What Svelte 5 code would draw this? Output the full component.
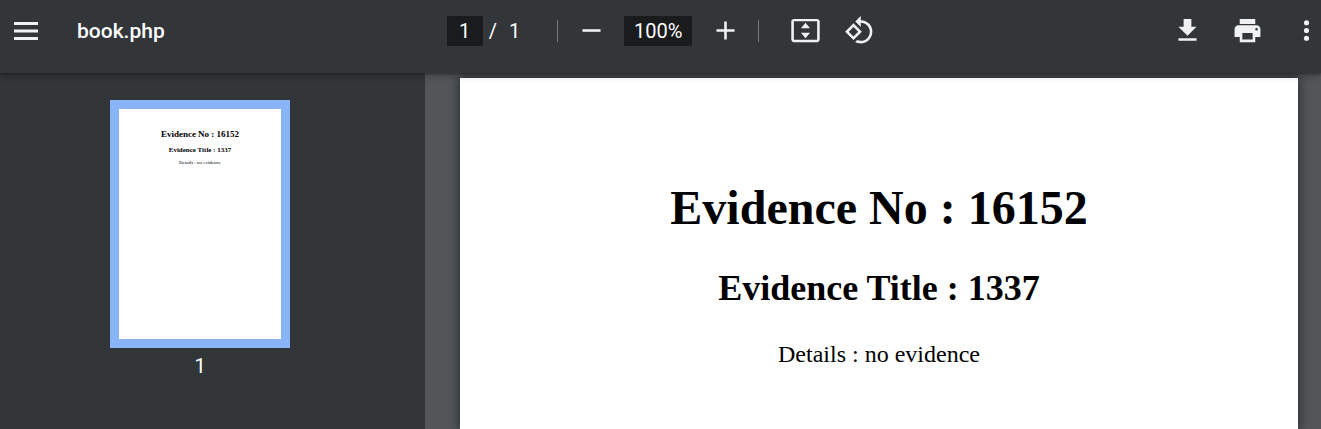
<script>
  const fileName = 'book.php';
  const evidence = {
    number: 'Evidence No : 16152',
    title: 'Evidence Title : 1337',
    details: 'Details : no evidence'
  };
  let page = $state('1');
  let zoom = $state('100%');
</script>

<svelte:head><title>{fileName}</title></svelte:head>

<div class="viewer">
  <header class="toolbar">
    <div class="start">
      <button class="icon" aria-label="Menu">
        <svg class="menu" viewBox="0 0 24 18"><path d="M0 0h24v3H0zM0 7.5h24v3H0zM0 15h24v3H0z" /></svg>
      </button>
      <h1>{fileName}</h1>
    </div>

    <div class="controls">
      <div class="pages">
        <input class="page-box" aria-label="Page number" bind:value={page} />
        <span class="slash">/</span>
        <span>1</span>
      </div>
      <span class="divider"></span>
      <div class="zoom">
        <button class="icon" aria-label="Zoom out">
          <svg viewBox="0 0 24 24"><path d="M5 11h14v2H5z" /></svg>
        </button>
        <input class="zoom-box" aria-label="Zoom level" bind:value={zoom} />
        <button class="icon" aria-label="Zoom in">
          <svg viewBox="0 0 24 24"><path d="M19 13h-6v6h-2v-6H5v-2h6V5h2v6h6z" /></svg>
        </button>
      </div>
      <span class="divider"></span>
      <div class="view">
        <button class="icon" aria-label="Fit to page">
          <svg viewBox="0 0 24 24">
            <path d="M21 3H3c-1.1 0-2 .9-2 2v14c0 1.1.9 2 2 2h18c1.1 0 2-.9 2-2V5c0-1.1-.9-2-2-2zm0 16.2H3V4.8h18z" />
            <path d="M12 6l3.5 4.3h-7zM12 18l-3.5-4.3h7z" />
          </svg>
        </button>
        <button class="icon" aria-label="Rotate counterclockwise">
          <svg viewBox="0 0 24 24">
            <path d="M7.34 6.41L.86 12.9l6.49 6.48 6.49-6.48-6.5-6.49zM3.69 12.9l3.66-3.66L11 12.9l-3.66 3.66-3.65-3.66zm15.67-6.26C17.61 4.88 15.3 4 13 4V.76L8.76 5 13 9.24V6c1.79 0 3.58.68 4.95 2.05 2.73 2.73 2.73 7.17 0 9.9C16.58 19.32 14.79 20 13 20c-.97 0-1.94-.21-2.84-.61l-1.49 1.49C10.02 21.62 11.51 22 13 22c2.3 0 4.61-.88 6.36-2.64 3.52-3.51 3.52-9.21 0-12.72z" />
          </svg>
        </button>
      </div>
    </div>

    <div class="end">
      <button class="icon" aria-label="Download">
        <svg viewBox="0 0 24 24"><path d="M19 9h-4V3H9v6H5l7 7 7-7zM5 18v2h14v-2H5z" /></svg>
      </button>
      <button class="icon" aria-label="Print">
        <svg viewBox="0 0 24 24">
          <path d="M19 8H5c-1.66 0-3 1.34-3 3v6h4v4h12v-4h4v-6c0-1.66-1.34-3-3-3zm-3 11H8v-5h8v5zm3-7c-.55 0-1-.45-1-1s.45-1 1-1 1 .45 1 1-.45 1-1 1zm-1-9H6v4h12V3z" />
        </svg>
      </button>
      <button class="icon more" aria-label="More actions">
        <svg viewBox="0 0 24 24">
          <circle cx="12" cy="6" r="2" /><circle cx="12" cy="12" r="2" /><circle cx="12" cy="18" r="2" />
        </svg>
      </button>
    </div>
  </header>

  <div class="body">
    <aside>
      <button class="thumb" aria-label="Page 1">
        <span class="t1">{evidence.number}</span>
        <span class="t2">{evidence.title}</span>
        <span class="t3">{evidence.details}</span>
      </button>
      <span class="label">1</span>
    </aside>
    <main>
      <article>
        <h2>{evidence.number}</h2>
        <h3>{evidence.title}</h3>
        <p>{evidence.details}</p>
      </article>
    </main>
  </div>
</div>

<style>
  :global(body) {
    margin: 0;
    background: #525659;
  }
  .viewer {
    display: flex;
    flex-direction: column;
    height: 100vh;
    overflow: hidden;
    font-family: Roboto, 'Liberation Sans', sans-serif;
    font-size: 20px;
    line-height: 30px;
    color: #fff;
  }
  .toolbar {
    position: relative;
    z-index: 1;
    display: grid;
    grid-template-columns: 1fr auto 1fr;
    padding: 15px 0 27px;
    background: #323639;
    box-shadow: 0 2px 8px rgba(0, 0, 0, 0.09), 0 4px 8px rgba(0, 0, 0, 0.06),
      0 1px 2px rgba(0, 0, 0, 0.3), 0 2px 6px rgba(0, 0, 0, 0.15);
  }
  .start,
  .controls,
  .pages,
  .zoom,
  .view,
  .end {
    display: flex;
    align-items: center;
  }
  .start {
    gap: 36px;
    padding-left: 11px;
  }
  .end {
    justify-content: flex-end;
    gap: 30px;
  }
  h1 {
    margin: 0;
    font-size: 21px;
    font-weight: 500;
  }
  button {
    padding: 0;
    border: 0;
    font: inherit;
    cursor: pointer;
  }
  .icon {
    display: flex;
    justify-content: center;
    align-items: center;
    width: 30px;
    height: 31px;
    background: none;
  }
  .icon svg {
    flex: none;
    width: 31px;
    height: 31px;
    fill: #f1f1f1;
  }
  .icon .menu {
    width: 24px;
    height: 18px;
  }
  .more {
    width: 29px;
  }
  .controls {
    gap: 18px;
  }
  .pages {
    margin-right: 19px;
  }
  input {
    box-sizing: border-box;
    height: 30px;
    padding: 0;
    border: 0;
    background: #191b1c;
    color: #fff;
    font: inherit;
    text-align: center;
  }
  .page-box {
    width: 36px;
  }
  .slash {
    margin: 0 12px 0 6px;
  }
  .zoom-box {
    width: 68px;
  }
  .zoom {
    gap: 18px;
  }
  .divider {
    width: 1px;
    height: 22px;
    background: #76797b;
  }
  .view {
    gap: 24px;
    margin-left: 13px;
  }
  .body {
    flex: 1;
    display: grid;
    grid-template-columns: 425px 1fr;
    min-height: 0;
  }
  aside {
    display: flex;
    flex-direction: column;
    align-items: center;
    gap: 3px;
    padding: 27px 25px 0 0;
    background: #323639;
  }
  .thumb {
    display: flex;
    flex-direction: column;
    align-items: center;
    box-sizing: border-box;
    width: 180px;
    height: 248px;
    padding-top: 18px;
    border: 9px solid #8ab4f8;
    background: #fff;
    color: #000;
    font-family: 'Liberation Serif', serif;
    white-space: nowrap;
  }
  .t1 {
    font-size: 9px;
    font-weight: 700;
    line-height: 14px;
  }
  .t2 {
    margin-top: 2px;
    font-size: 7px;
    font-weight: 700;
    line-height: 14px;
  }
  .t3 {
    font-size: 5px;
    line-height: 12px;
  }
  main {
    display: flex;
    padding: 5px 23px 0 35px;
    background: #525659;
  }
  article {
    flex: 1;
    padding-top: 102px;
    background: #fff;
    box-shadow: 0 0 10px 1px rgba(0, 0, 0, 0.5);
    color: #000;
    font-family: 'Liberation Serif', serif;
    text-align: center;
  }
  h2,
  h3,
  p {
    margin: 0;
  }
  h2 {
    font-size: 48px;
    line-height: 56px;
  }
  h3 {
    margin-top: 31px;
    font-size: 36px;
    line-height: 42px;
  }
  p {
    margin-top: 31px;
    font-size: 24px;
    line-height: 28px;
  }
</style>
